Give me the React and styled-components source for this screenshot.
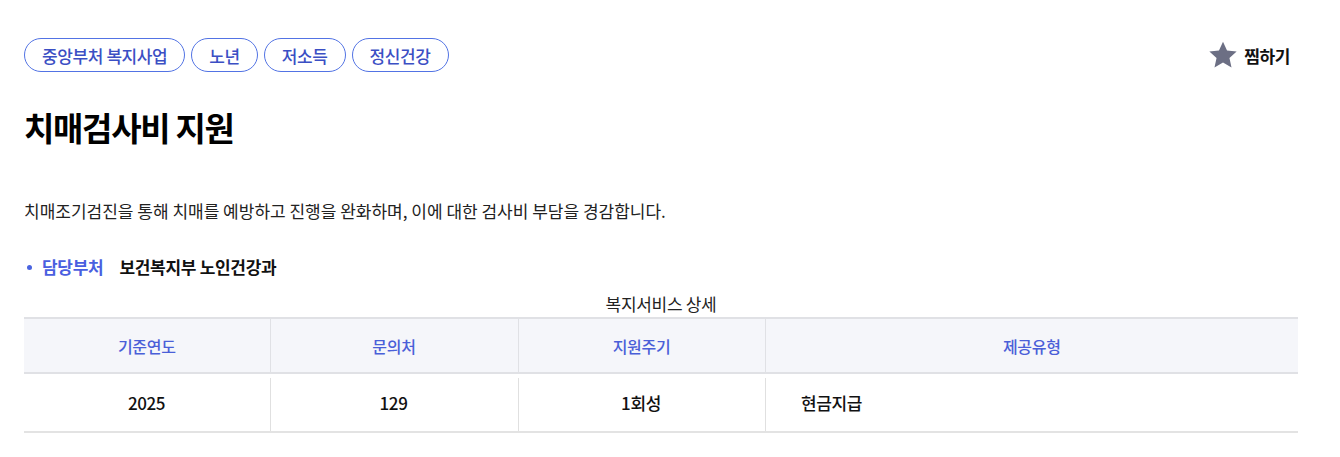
import React from "react";
import styled, { createGlobalStyle } from "styled-components";

const Global = createGlobalStyle`
  html, body { margin: 0; padding: 0; background: #fff; }
  body { font-family: "Noto Sans CJK KR", "Noto Sans", sans-serif; color: #111; }
  * { box-sizing: border-box; }
`;

const Page = styled.div`
  padding: 38px 42px 24px 24px;
  width: 1340px;
`;

const TopBar = styled.div`
  display: flex;
  align-items: center;
  justify-content: space-between;
`;

const Tags = styled.div`
  display: flex;
  gap: 6px;
`;

const Tag = styled.span`
  display: inline-flex;
  align-items: center;
  height: 34px;
  padding: 0 17px;
  border: 1px solid #5273e4;
  border-radius: 17px;
  color: #3b4fc4;
  font-size: 17px;
  font-weight: 500;
  letter-spacing: -0.4px;
`;

const Zzim = styled.button`
  display: flex;
  align-items: center;
  gap: 6px;
  border: 0;
  background: none;
  padding: 0 8px 0 0;
  font-family: inherit;
  font-size: 17px;
  font-weight: 700;
  color: #111;
  letter-spacing: -0.4px;
  cursor: pointer;
`;

const Title = styled.h1`
  margin: 33px 0 0;
  font-size: 33px;
  font-weight: 700;
  letter-spacing: -1.3px;
  line-height: 44px;
  color: #000;
`;

const Desc = styled.p`
  margin: 50px 0 0;
  font-size: 17px;
  line-height: 24px;
  letter-spacing: 0;
  color: #222;
`;

const InfoRow = styled.div`
  display: flex;
  align-items: center;
  margin-top: 32px;
  font-size: 17px;
  font-weight: 700;
  letter-spacing: -0.3px;
  line-height: 24px;
`;

const Dot = styled.span`
  width: 5px;
  height: 5px;
  border-radius: 50%;
  background: #4a64e0;
  margin: 0 10px 0 3px;
`;

const InfoLabel = styled.span`
  color: #4a5fe0;
  margin-right: 16px;
`;

const InfoValue = styled.span`
  color: #111;
`;

const Table = styled.table`
  width: 1274px;
  margin-top: 14px;
  border-collapse: collapse;
  table-layout: fixed;
`;

const Caption = styled.caption`
  font-size: 17px;
  line-height: 22px;
  letter-spacing: -0.3px;
  color: #222;
  padding-bottom: 2px;
`;

const Th = styled.th`
  height: 55px;
  background: #f5f6fa;
  border-top: 2px solid #e0e1e5;
  border-bottom: 2px solid #e0e1e5;
  border-left: ${(p) => (p.$first ? "0" : "1px solid #e0e1e5")};
  color: #4a5fd8;
  font-size: 16px;
  font-weight: 500;
  letter-spacing: -0.3px;
`;

const Td = styled.td`
  height: 59px;
  border-bottom: 2px solid #e3e3e3;
  background: ${(p) =>
    p.$first
      ? "none"
      : "linear-gradient(#e0e0e0, #e0e0e0) left 4px / 1px calc(100% - 4px) no-repeat"};
  text-align: ${(p) => (p.$left ? "left" : "center")};
  padding-left: ${(p) => (p.$left ? "36px" : "0")};
  font-size: 17px;
  font-weight: 500;
  letter-spacing: -0.4px;
  color: #111;
`;

const Star = () => (
  <svg width="30" height="28" viewBox="0 0 24 23" aria-hidden="true">
    <path
      d="M12 0.6l3.3 7.2 7.9 0.8-5.9 5.3 1.7 7.8L12 17.7l-7 4 1.7-7.8-5.9-5.3 7.9-0.8z"
      fill="#6c6f84"
    />
  </svg>
);

export default function App() {
  return (
    <Page>
      <Global />
      <TopBar>
        <Tags>
          <Tag>중앙부처 복지사업</Tag>
          <Tag>노년</Tag>
          <Tag>저소득</Tag>
          <Tag>정신건강</Tag>
        </Tags>
        <Zzim>
          <Star />
          찜하기
        </Zzim>
      </TopBar>
      <Title>치매검사비 지원</Title>
      <Desc>
        치매조기검진을 통해 치매를 예방하고 진행을 완화하며, 이에 대한 검사비 부담을 경감합니다.
      </Desc>
      <InfoRow>
        <Dot />
        <InfoLabel>담당부처</InfoLabel>
        <InfoValue>보건복지부 노인건강과</InfoValue>
      </InfoRow>
      <Table>
        <Caption>복지서비스 상세</Caption>
        <colgroup>
          <col style={{ width: 246 }} />
          <col style={{ width: 248 }} />
          <col style={{ width: 247 }} />
          <col />
        </colgroup>
        <thead>
          <tr>
            <Th $first>기준연도</Th>
            <Th>문의처</Th>
            <Th>지원주기</Th>
            <Th>제공유형</Th>
          </tr>
        </thead>
        <tbody>
          <tr>
            <Td $first>2025</Td>
            <Td>129</Td>
            <Td>1회성</Td>
            <Td $left>현금지급</Td>
          </tr>
        </tbody>
      </Table>
    </Page>
  );
}
